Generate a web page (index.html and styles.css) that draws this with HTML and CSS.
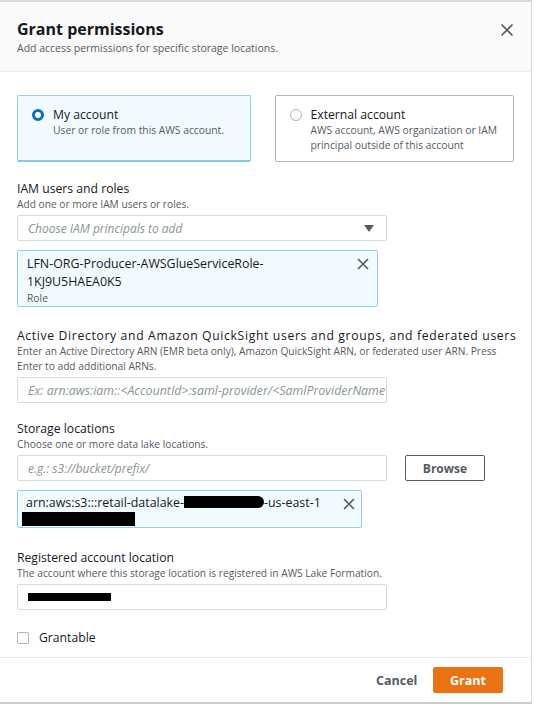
FILE: index.html
```html
<!DOCTYPE html>
<html>
<head>
<meta charset="utf-8">
<link rel="stylesheet" href="styles.css">
</head>
<body>
<div class="modal">
  <div class="header">
    <div class="titles">
      <div class="title">Grant permissions</div>
      <div class="subtitle">Add access permissions for specific storage locations.</div>
    </div>
    <svg class="close" width="14" height="14" viewBox="0 0 14 14"><path d="M1.5 1.5 L12.5 12.5 M12.5 1.5 L1.5 12.5" stroke="#545b64" stroke-width="1.6" fill="none"/></svg>
  </div>
  <div class="body">
    <div class="cards">
      <div class="card selected">
        <span class="radio on"></span>
        <div class="card-text">
          <div class="card-title">My account</div>
          <div class="card-desc">User or role from this AWS account.</div>
        </div>
      </div>
      <div class="card">
        <span class="radio"></span>
        <div class="card-text">
          <div class="card-title">External account</div>
          <div class="card-desc">AWS account, AWS organization or IAM principal outside of this account</div>
        </div>
      </div>
    </div>

    <div class="field f-iam">
      <div class="label">IAM users and roles</div>
      <div class="desc">Add one or more IAM users or roles.</div>
      <div class="input select w370">
        <span class="ph">Choose IAM principals to add</span>
        <svg width="10" height="7" viewBox="0 0 10 7"><path d="M0 0 H10 L5 7 Z" fill="#545b64"/></svg>
      </div>
      <div class="token t-role">
        <div class="token-text">
          <div class="token-main">LFN-ORG-Producer-AWSGlueServiceRole-<br>1KJ9U5HAEA0K5</div>
          <div class="token-sub">Role</div>
        </div>
        <svg class="tx" width="12" height="12" viewBox="0 0 12 12"><path d="M1 1 L11 11 M11 1 L1 11" stroke="#545b64" stroke-width="1.6" fill="none"/></svg>
      </div>
    </div>

    <div class="field f-ad">
      <div class="label ad-label">Active Directory and Amazon QuickSight users and groups, and federated users</div>
      <div class="desc">Enter an Active Directory ARN (EMR beta only), Amazon QuickSight ARN, or federated user ARN. Press Enter to add additional ARNs.</div>
      <div class="input w370"><span class="ph ph-ad">Ex: arn:aws:iam::&lt;AccountId&gt;:saml-provider/&lt;SamlProviderName&gt;</span></div>
    </div>

    <div class="field f-st">
      <div class="label">Storage locations</div>
      <div class="desc">Choose one or more data lake locations.</div>
      <div class="row">
        <div class="input w370"><span class="ph">e.g.: s3://bucket/prefix/</span></div>
        <button class="btn-browse">Browse</button>
      </div>
      <div class="token t-s3">
        <div class="token-text">
          <div class="token-main s3-line">arn:aws:s3:::retail-datalake-<span class="redact r1"></span>-us-east-1</div>
          <div class="redact r2"></div>
        </div>
        <svg class="tx" width="12" height="12" viewBox="0 0 12 12"><path d="M1 1 L11 11 M11 1 L1 11" stroke="#545b64" stroke-width="1.6" fill="none"/></svg>
      </div>
    </div>

    <div class="field f-reg">
      <div class="label">Registered account location</div>
      <div class="desc">The account where this storage location is registered in AWS Lake Formation.</div>
      <div class="input w370"><span class="redact r3"></span></div>
    </div>

    <div class="check-row">
      <span class="checkbox"></span>
      <span class="check-label">Grantable</span>
    </div>
  </div>
  <div class="footer">
    <button class="btn-cancel">Cancel</button>
    <button class="btn-grant">Grant</button>
  </div>
</div>
</body>
</html>
```
FILE: styles.css
```css
* { box-sizing: border-box; }
html, body { margin: 0; padding: 0; background: #ffffff; }
body {
  font-family: "Open Sans", "Liberation Sans", sans-serif;
  color: #16191f;
  width: 535px;
  height: 706px;
  overflow: hidden;
}
.modal {
  width: 532px;
  height: 704px;
  border-top: 2px solid #d5dbdb;
  border-right: 1px solid #d5dbdb;
  border-bottom: 2px solid #c7cccc;
  display: flex;
  flex-direction: column;
  background: #fff;
}
.header {
  background: #fafafa;
  border-bottom: 1px solid #eaeded;
  height: 70px;
  padding: 16px 17px 0 17px;
  display: flex;
  justify-content: space-between;
  align-items: flex-start;
}
.title {
  font-size: 16px;
  font-weight: 700;
  line-height: 22px;
}
.subtitle {
  font-size: 10.5px;
  line-height: 14px;
  color: #545b64;
  margin-top: 1px;
}
.close { margin-top: 5px; margin-right: 0; }
.body {
  flex: 1;
  padding: 23px 17px 0 17px;
}
.cards { display: flex; gap: 24px; }
.card {
  height: 67px;
  border: 1px solid #aab7b8;
  border-radius: 2px;
  display: flex;
  padding: 11px 10px 0 14px;
  gap: 9px;
  width: 241px;
}
.card.selected {
  width: 235px;
  background: #f1faff;
  border: 1px solid #8fd3e6;
  border-bottom: 2px solid #7fcde3;
}
.radio {
  width: 12px; height: 12px;
  border-radius: 50%;
  border: 1px solid #aab7b8;
  margin-top: 2px;
  flex: none;
  background: #fff;
}
.radio.on {
  border: 3.5px solid #0073bb;
}
.card-title { font-size: 12.2px; line-height: 16px; }
.card-desc { font-size: 10.3px; line-height: 15px; color: #545b64; }
.field { margin-top: 18px; }
.label { font-size: 12.2px; line-height: 16px; }
.ad-label { letter-spacing: 0.65px; white-space: nowrap; }
.desc { font-size: 10.2px; line-height: 15px; color: #545b64; }
.input {
  height: 26px;
  border: 1px solid #d5dbdb;
  border-radius: 2px;
  background: #fff;
  margin-top: 3px;
  display: flex;
  align-items: center;
  padding: 0 10px;
  overflow: hidden;
  white-space: nowrap;
}
.w370 { width: 370px; }
.select { justify-content: space-between; padding-right: 12px; }
.ph { font-style: italic; color: #879596; font-size: 12px; }
.ph-ad { font-size: 12.4px; }
.token {
  margin-top: 9px;
  background: #f1faff;
  border: 1px solid #8fd3e6;
  border-radius: 2px;
  display: flex;
  justify-content: space-between;
  align-items: flex-start;
}
.t-role { width: 361px; height: 57px; padding: 4px 8px 0 9px; }
.t-s3 { width: 345px; height: 38px; padding: 4px 6px 0 5px; }
.token-main { font-size: 12.4px; line-height: 18px; }
.s3-line { white-space: nowrap; line-height: 16px; }
.token-sub { font-size: 10.3px; line-height: 14px; color: #545b64; }
.tx { margin-top: 3px; flex: none; }
.f-iam { margin-top: 19px; }
.f-ad { margin-top: 21px; }
.f-st { margin-top: 18px; }
.f-reg { margin-top: 22px; }
.row { display: flex; align-items: center; gap: 18px; }
.btn-browse {
  margin-top: 3px;
  width: 80px; height: 26px;
  border: 1px solid #545b64;
  border-radius: 2px;
  background: #fff;
  font-family: inherit;
  font-weight: 700;
  font-size: 12px;
  color: #545b64;
}
.redact { display: inline-block; background: #000; }
.r1 { width: 80px; height: 12px; vertical-align: -1px; border-radius: 0 6px 6px 0; }
.r2 { display: block; width: 113px; height: 14px; margin-top: 1px; }
.t-s3 .token-text { margin-left: 3px; }
.t-s3 .r2 { margin-left: -4px; }
.r3 { width: 83px; height: 8px; }
.check-row { margin-top: 19px; display: flex; align-items: center; gap: 10px; }
.checkbox {
  width: 12px; height: 12px;
  border: 1px solid #aab7b8;
  border-radius: 2px;
}
.check-label { font-size: 12.2px; }
.footer {
  height: 45px;
  border-top: 1px solid #eaeded;
  display: flex;
  justify-content: flex-end;
  align-items: center;
  padding-right: 28px;
  gap: 17px;
  margin-bottom: 0;
}
.btn-cancel {
  background: none; border: none;
  font-family: inherit; font-weight: 700; font-size: 12.5px;
  color: #545b64;
  padding: 0;
  width: 40px;
}
.btn-grant {
  width: 70px; height: 26px;
  background: #ec7211;
  border: 1px solid #ec7211;
  border-radius: 2px;
  color: #fff;
  font-family: inherit; font-weight: 700; font-size: 12.5px;
}
```
